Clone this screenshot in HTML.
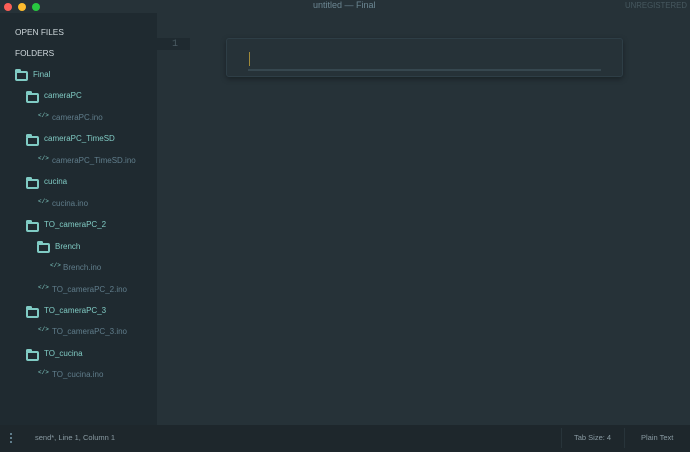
<!DOCTYPE html>
<html><head><style>
*{margin:0;padding:0;box-sizing:border-box}
body{width:690px;height:452px;overflow:hidden;background:#263238;font-family:"Liberation Sans",sans-serif;position:relative}
.t{position:absolute;white-space:nowrap}
#side{position:absolute;left:0;top:13px;width:157px;height:412px;background:#1f2a30}
#status{position:absolute;left:0;top:425px;width:690px;height:27px;background:#1e272c}
.h{font-size:8.3px;color:#cfd8dc;left:15px}
.f{font-size:8px;color:#80cbc4}
.fi{font-size:8px;color:#607d8b}
.fold{position:absolute;width:13px;height:10px;border:2px solid #80cbc4;border-top-width:2.5px;border-radius:2px}
.fold:before{content:"";position:absolute;left:-2px;top:-4px;width:6px;height:3px;background:#80cbc4;border-radius:1.5px 1.5px 0 0}
.code{position:absolute;font-size:6px;color:#80cbc4;font-family:"Liberation Mono",monospace}
.dot{position:absolute;top:3px;width:8px;height:8px;border-radius:50%}
</style></head><body>
<div class="dot" style="left:4px;background:#fc5f57"></div>
<div class="dot" style="left:18px;background:#fdbc2e"></div>
<div class="dot" style="left:32px;background:#28c840"></div>
<div class="t" style="left:313px;top:0px;font-size:9px;color:#6c8793">untitled — Final</div>
<div class="t" style="left:625px;top:1px;font-size:7.8px;color:#46585f">UNREGISTERED</div>
<div id="side"></div>
<div class="t h" style="top:27px">OPEN FILES</div>
<div class="t h" style="top:48px">FOLDERS</div>

<div class="fold" style="left:15px;top:71px"></div><div class="t f" style="left:33px;top:70px">Final</div>
<div class="fold" style="left:26px;top:93px"></div><div class="t f" style="left:44px;top:91px">cameraPC</div>
<div class="code" style="left:38px;top:112px">&lt;/&gt;</div><div class="t fi" style="left:52px;top:113px">cameraPC.ino</div>
<div class="fold" style="left:26px;top:136px"></div><div class="t f" style="left:44px;top:134px">cameraPC_TimeSD</div>
<div class="code" style="left:38px;top:155px">&lt;/&gt;</div><div class="t fi" style="left:52px;top:156px">cameraPC_TimeSD.ino</div>
<div class="fold" style="left:26px;top:179px"></div><div class="t f" style="left:44px;top:177px">cucina</div>
<div class="code" style="left:38px;top:198px">&lt;/&gt;</div><div class="t fi" style="left:52px;top:199px">cucina.ino</div>
<div class="fold" style="left:26px;top:222px"></div><div class="t f" style="left:44px;top:220px">TO_cameraPC_2</div>
<div class="fold" style="left:37px;top:243px"></div><div class="t f" style="left:55px;top:242px">Brench</div>
<div class="code" style="left:50px;top:262px">&lt;/&gt;</div><div class="t fi" style="left:63px;top:263px">Brench.ino</div>
<div class="code" style="left:38px;top:284px">&lt;/&gt;</div><div class="t fi" style="left:52px;top:285px">TO_cameraPC_2.ino</div>
<div class="fold" style="left:26px;top:308px"></div><div class="t f" style="left:44px;top:306px">TO_cameraPC_3</div>
<div class="code" style="left:38px;top:326px">&lt;/&gt;</div><div class="t fi" style="left:52px;top:327px">TO_cameraPC_3.ino</div>
<div class="fold" style="left:26px;top:351px"></div><div class="t f" style="left:44px;top:349px">TO_cucina</div>
<div class="code" style="left:38px;top:369px">&lt;/&gt;</div><div class="t fi" style="left:52px;top:370px">TO_cucina.ino</div>

<div style="position:absolute;left:157px;top:38px;width:33px;height:12px;background:#1f2a30"></div>
<div class="t" style="left:172px;top:38.5px;font-size:10px;color:#4a5b63;font-family:'Liberation Mono',monospace">1</div>

<div style="position:absolute;left:226px;top:38px;width:397px;height:39px;background:#263238;border:1px solid #2e3e46;border-radius:3px;box-shadow:0 2px 6px rgba(0,0,0,.35)"></div>
<div style="position:absolute;left:249px;top:52px;width:1px;height:14px;background:#a08a3a"></div>
<div style="position:absolute;left:248px;top:69px;width:353px;height:2px;background:#36474f"></div>

<div id="status"></div>
<div style="position:absolute;left:10px;top:433px;width:2px;height:2px;background:#607d8b;box-shadow:0 4px #607d8b,0 8px #607d8b"></div>
<div class="t" style="left:35px;top:433px;font-size:7.5px;color:#8a9ba3">send*, Line 1, Column 1</div>
<div style="position:absolute;left:561px;top:428px;width:1px;height:20px;background:#28343a"></div>
<div class="t" style="left:574px;top:433px;font-size:7.5px;color:#8a9ba3">Tab Size: 4</div>
<div style="position:absolute;left:624px;top:428px;width:1px;height:20px;background:#28343a"></div>
<div class="t" style="left:641px;top:433px;font-size:7.5px;color:#8a9ba3">Plain Text</div>
</body></html>
